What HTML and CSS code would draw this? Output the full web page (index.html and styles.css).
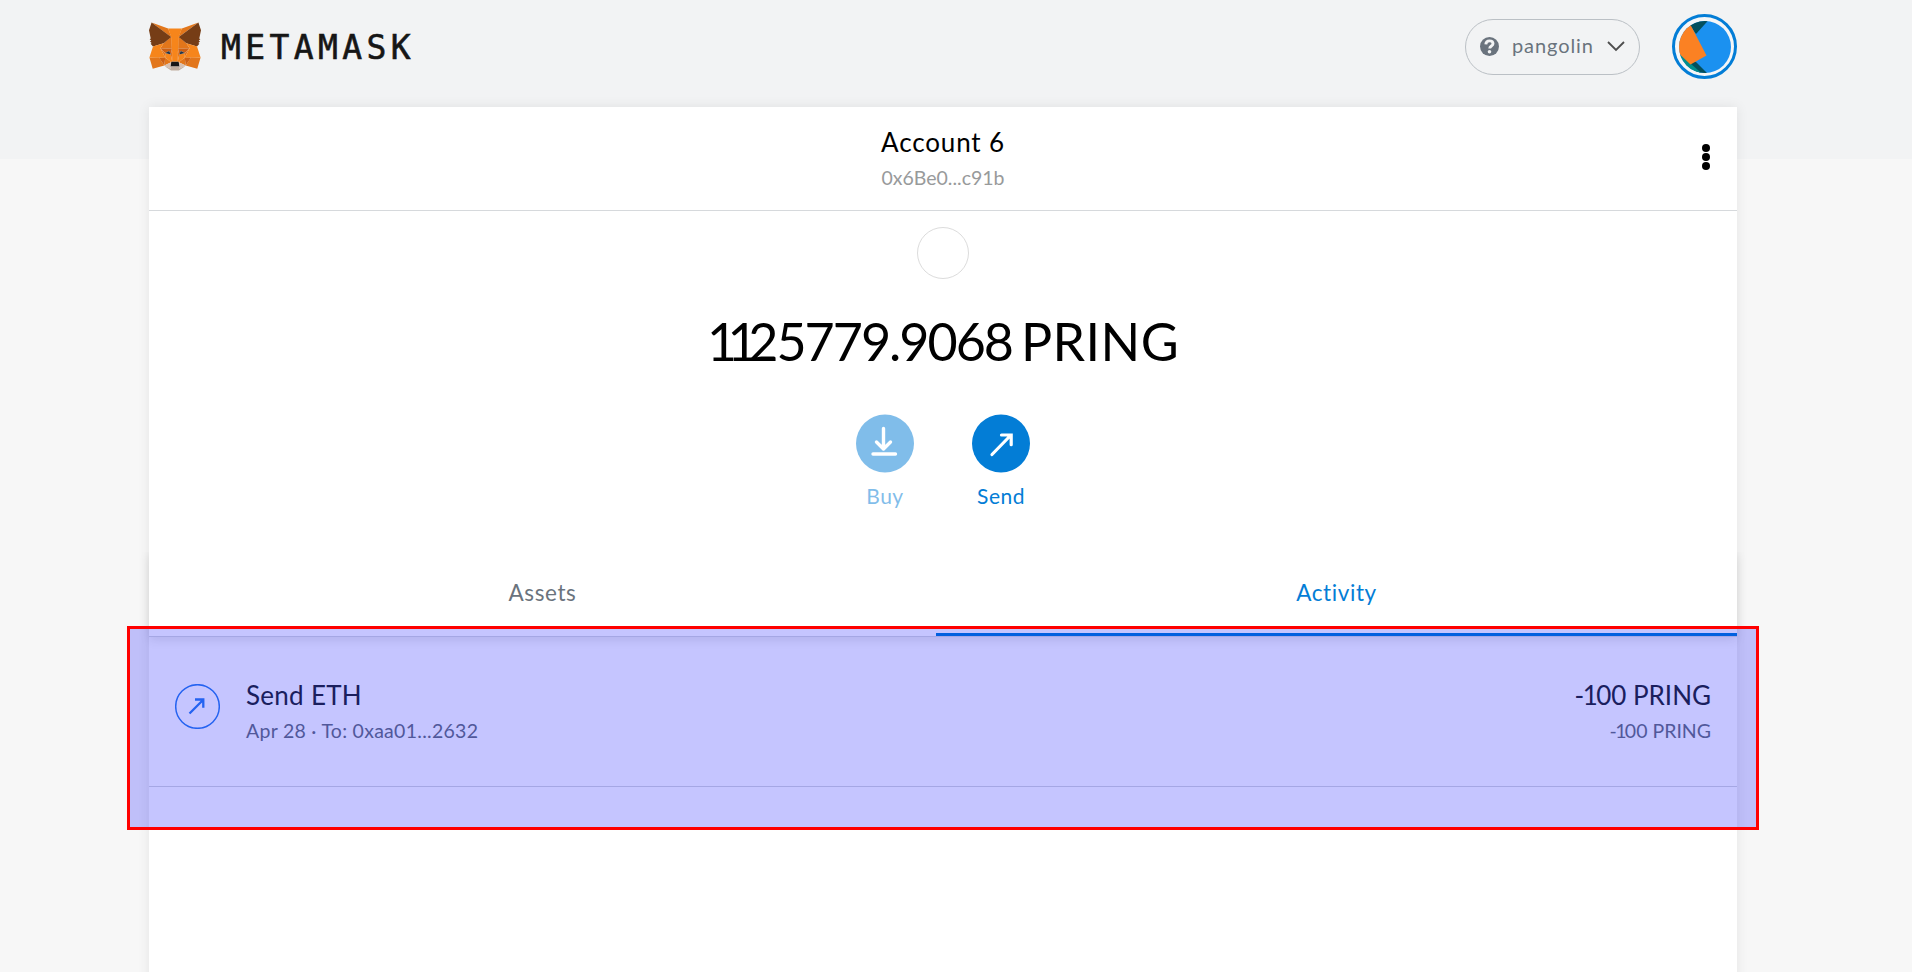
FILE: index.html
```html
<!DOCTYPE html>
<html lang="en">
<head>
<meta charset="utf-8">
<title>MetaMask</title>
<link rel="stylesheet" href="styles.css">
</head>
<body>
<header class="app-header">
  <div class="brand">
    <svg class="fox" viewBox="31.8 35.5 255 236.4">
      <g fill="#e2761b"><path d="M274.1 35.5 174.6 109.4 193 65.8ZM44.4 35.5l98.7 74.6-17.5-44.3ZM238.3 206.8l-26.5 40.6 56.7 15.6 16.3-55.3ZM33.9 207.7 50.1 263l56.7-15.6-26.5-40.6ZM103.6 138.2l-15.8 23.9 56.3 2.5-2-60.5ZM214.9 138.2l-39-34.8-1.3 61.2 56.2-2.5ZM106.8 247.4l33.8-16.5-29.2-22.8ZM177.9 230.9l33.9 16.5-4.7-39.3Z"/></g>
      <path fill="#d7c1b3" d="M211.8 247.4l-33.9-16.5 2.7 22.1-.3 9.3ZM106.8 247.4l31.5 14.9-.2-9.3 2.5-22.1Z"/>
      <path fill="#cd6116" d="M106.8 247.4l4.8-40.6-31.3.9ZM207 206.8l4.8 40.6 26.5-39.7ZM230.8 162.1l-56.2 2.5 5.2 28.9 8.3-17.4 20 9.1ZM110.6 185.2l20-9.1 8.2 17.4 5.3-28.9-56.3-2.5Z"/>
      <path fill="#e4751f" d="M87.8 162.1l23.6 46-.8-22.9ZM208.1 185.2l-1 22.9 23.7-46ZM144.1 164.6l-5.3 28.9 6.6 34.1 1.5-44.9ZM174.6 164.6l-2.7 18 1.2 45 6.7-34.1Z"/>
      <path fill="#f6851b" d="M179.8 193.5l-6.7 34.1 4.8 3.3 29.2-22.8 1-22.9ZM110.6 185.2l.8 22.9 29.2 22.8 4.8-3.3-6.6-34.1Z"/>
      <path fill="#233447" d="M138.8 193.5l-28.2-8.3 19.9-9.1ZM179.7 193.5l8.3-17.4 20 9.1Z"/>
      <path fill="#c0ad9e" d="M180.3 262.3l.3-9.3-2.5-2.2h-37.7l-2.3 2.2.2 9.3-31.5-14.9 11 9 22.3 15.5h38.3l22.4-15.5 11-9Z"/>
      <path fill="#161616" d="M177.9 230.9l-4.8-3.3h-27.7l-4.8 3.3-2.5 22.1 2.3-2.2h37.7l2.5 2.2Z"/>
      <path fill="#763d16" d="M278.3 114.2l8.5-40.8-12.7-37.9-96.2 71.4 37 31.3 52.3 15.3 11.6-13.5-5-3.6 8-7.3-6.2-4.8 8-6.1ZM31.8 73.4l8.5 40.8-5.4 4 8 6.1-6.1 4.8 8 7.3-5 3.6 11.5 13.5 52.3-15.3 37-31.3-96.2-71.4Z"/>
      <path fill="#f6851b" d="M267.2 153.5l-52.3-15.3 15.9 23.9-23.7 46 31.2-.4h46.5ZM103.6 138.2l-52.3 15.3-17.4 54.2h46.4l31.1.4-23.6-46ZM174.6 164.6l3.3-57.7 15.2-41.1h-67.5l15 41.1 3.5 57.7 1.2 18.2.1 44.8h27.7l.2-44.8Z"/>
    </svg>
    <span class="wordmark">METAMASK</span>
  </div>
  <div class="controls">
    <div class="network">
      <svg class="question" viewBox="0 0 19 19"><circle cx="9.5" cy="9.5" r="9.5" fill="#6a737d"/><path d="M5.800 7.300C6 4.800 7.600 3.900 9.500 3.900c2.200 0 3.500 1.100 3.500 2.800 0 2.400-3.300 2.300-3.300 4.800" fill="none" stroke="#f2f3f4" stroke-width="2.900"/><circle cx="9.500" cy="14.800" r="1.800" fill="#f2f3f4"/></svg>
      <span class="network-name">pangolin</span>
      <svg class="chevron" viewBox="0 0 18 11"><path d="M1 1l8 8 8-8" fill="none" stroke="#4d4d4d" stroke-width="1.8"/></svg>
    </div>
    <svg class="avatar" viewBox="0 0 65 65">
      <defs><clipPath id="disc"><circle cx="33" cy="33" r="26"/></clipPath></defs>
      <circle cx="32.5" cy="32.5" r="31" fill="#f5f6f7" stroke="#037dd6" stroke-width="3"/>
      <g clip-path="url(#disc)">
        <path fill="#1b91f0" d="M0 0h65v65H0z"/>
        <path fill="#034f5d" d="M10 0h32L24 20z"/>
        <path fill="#034f5d" d="M14 46l10 2 17 17-10 2z"/>
        <path fill="#018e8c" d="M0 33l36 32H0z"/>
        <path fill="#fb8123" d="M16 6l18.500 35.500L18.500 50.500 0 33z"/>
      </g>
    </svg>
  </div>
</header>
<main class="panel">
  <div class="account">
    <div class="account-name">Account 6</div>
    <div class="account-address">0x6Be0...c91b</div>
    <svg class="dots" viewBox="0 0 8 26"><circle cx="4" cy="4" r="4"/><circle cx="4" cy="13" r="4"/><circle cx="4" cy="22" r="4"/></svg>
  </div>
  <section class="overview">
    <div class="token"></div>
    <div class="balance"><span class="ones">11</span><span class="digits">25779.9068</span><span class="unit">PRING</span></div>
    <div class="actions">
      <div class="action disabled">
        <svg class="action-icon" viewBox="0 0 58 58"><circle cx="29" cy="29" r="29" fill="#037dd6"/><path d="M27.500 14v20M20.500 27.500l7 7 7-7M17 39.500h22.500" fill="none" stroke="#fff" stroke-width="3.400" stroke-linecap="round" stroke-linejoin="round"/></svg>
        <span>Buy</span>
      </div>
      <div class="action">
        <svg class="action-icon" viewBox="0 0 58 58"><circle cx="29" cy="29" r="29" fill="#037dd6"/><path d="M20 40l18.500-19M29.500 20.500h9.700v9.700" fill="none" stroke="#fff" stroke-width="3.200" stroke-linecap="round" stroke-linejoin="miter"/></svg>
        <span>Send</span>
      </div>
    </div>
  </section>
  <nav class="tabs">
    <div class="tab assets">Assets</div>
    <div class="tab active">Activity</div>
  </nav>
  <div class="item">
    <svg class="item-icon" viewBox="0 0 45 45"><circle cx="22.500" cy="22.500" r="21.800" fill="none" stroke="#2f80ed" stroke-width="1.500"/><path d="M14.500 29.500L28 16M20 15.500h8.300v8.300" fill="none" stroke="#2f80ed" stroke-width="2.300"/></svg>
    <div class="item-main">
      <div class="item-title">Send ETH</div>
      <div class="item-sub">Apr 28 · To: 0xaa01...2632</div>
    </div>
    <div class="item-amount">
      <div class="item-title"><span class="tight">-1</span>00 PRING</div>
      <div class="item-sub"><span class="tight">-1</span>00 PRING</div>
    </div>
  </div>
  <div class="highlight"></div>
</main>
</body>
</html>
```
FILE: styles.css
```css
* { box-sizing: border-box; }
body {
  margin: 0;
  height: 972px;
  overflow: hidden;
  background: linear-gradient(#f2f3f4 158.5px, #f7f7f7 158.5px);
  font-family: Lato, sans-serif;
  color: #000;
}
svg { display: block; flex: none; }
.app-header {
  height: 107px;
  margin: 0 175px 0 149px;
  padding-top: 14px;
  display: flex;
  justify-content: space-between;
  align-items: flex-start;
}
.brand { display: flex; align-items: center; padding-top: 8px; gap: 20px; }
.fox { width: 52px; height: 49px; }
.wordmark {
  padding-top: 2px;
  font: 33px/40px "DejaVu Sans Mono", monospace;
  letter-spacing: 4.4px;
  color: #161616;
  -webkit-text-stroke: 0.6px #161616;
}
.controls { display: flex; align-items: center; gap: 32px; }
.network {
  width: 175px;
  height: 56px;
  border: 1px solid #bbc0c5;
  border-radius: 28px;
  display: flex;
  align-items: center;
  padding: 0 14px 0 14px;
}
.question { width: 19px; height: 19px; }
.network-name {
  flex: 1;
  padding: 0 0 4px 13px;
  font-size: 20px;
  line-height: 24px;
  letter-spacing: 0.9px;
  color: #6a737d;
}
.chevron { width: 18px; height: 11px; }
.avatar { width: 65px; height: 65px; }
.panel {
  position: relative;
  width: 1588px;
  height: 900px;
  margin-left: 149px;
  background: #fff;
  box-shadow: 0 0 12px rgba(0, 0, 0, 0.08);
}
.account {
  position: relative;
  height: 104px;
  padding-top: 19px;
  border-bottom: 1px solid #d6d9dc;
  text-align: center;
}
.account-name { font-size: 26px; line-height: 32px; letter-spacing: 0.85px; }
.account-address {
  margin-top: 8px;
  font-size: 19.5px;
  line-height: 24px;
  color: #989a9b;
}
.dots { position: absolute; right: 27px; top: 37px; width: 8px; height: 26px; }
.overview {
  height: 341px;
  padding-top: 16px;
  display: flex;
  flex-direction: column;
  align-items: center;
}
.token { width: 52px; height: 52px; border: 1px solid #dcdcdc; border-radius: 50%; }
.balance {
  margin-top: 30px;
  height: 64px;
  font-size: 52px;
  line-height: 64px;
  white-space: nowrap;
}
.ones { letter-spacing: -9.5px; }
.digits { letter-spacing: -2px; }
.unit { margin-left: 9px; letter-spacing: 0.4px; }
.actions { display: flex; gap: 58px; margin-top: 41px; }
.action {
  width: 58px;
  display: flex;
  flex-direction: column;
  align-items: center;
  gap: 11px;
  font-size: 21px;
  line-height: 24px;
  letter-spacing: 0.5px;
  color: #037dd6;
}
.action-icon { width: 58px; height: 59px; }
.disabled { opacity: 0.5; }
.tabs {
  height: 85px;
  display: flex;
  border-bottom: 1px solid #d6d9dc;
  box-shadow: 0 3px 10px rgba(0, 0, 0, 0.1);
  clip-path: inset(0 -14px -16px);
}
.tab {
  flex: 1;
  display: flex;
  align-items: center;
  justify-content: center;
  padding-bottom: 1px;
  border-bottom: 3px solid transparent;
  font-size: 22.5px;
  letter-spacing: 0.6px;
  color: #6a737d;
}
.assets { flex: 0 0 787px; }
.active { color: #037dd6; border-bottom-color: #037dd6; }
.item {
  height: 150px;
  display: flex;
  align-items: flex-start;
  padding: 41px 26px 0 26px;
  border-bottom: 1px solid #d6d9dc;
}
.item-icon { width: 45px; height: 45px; margin-top: 6px; }
.item-main { flex: 1; padding: 1px 0 0 26px; letter-spacing: 0.28px; }
.item-title { font-size: 26px; line-height: 32px; color: #24292e; }
.item-sub { margin-top: 8px; font-size: 19.5px; line-height: 24px; color: #6a737d; }
.item-amount { padding-top: 1px; text-align: right; }
.tight { letter-spacing: -1.6px; }
.highlight {
  position: absolute;
  left: -22px;
  top: 519px;
  width: 1632px;
  height: 204px;
  border: 3px solid #f00;
  background: rgba(0, 0, 255, 0.227);
}
```
